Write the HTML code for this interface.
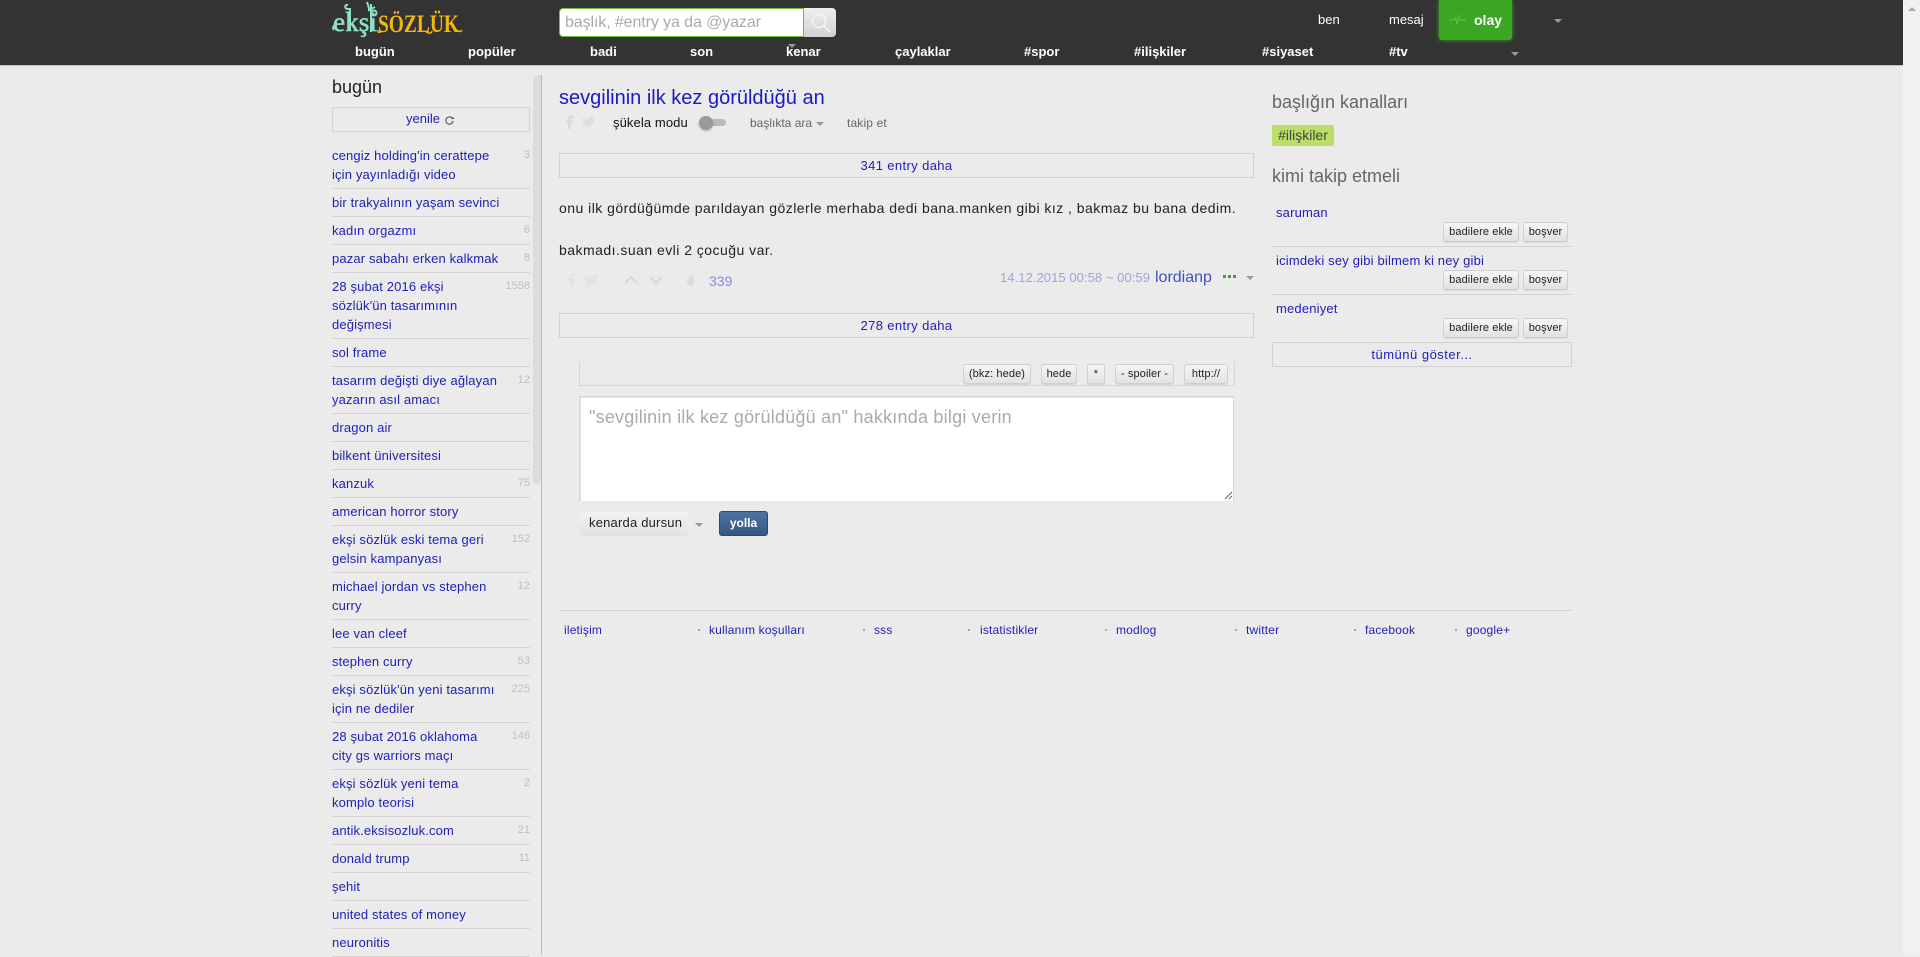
<!DOCTYPE html>
<html lang="tr">
<head>
<meta charset="utf-8">
<title>sevgilinin ilk kez görüldüğü an - ekşi sözlük</title>
<style>
html,body{margin:0;padding:0;width:1920px;height:955px;overflow:hidden;background:#ebebeb;font-family:"Liberation Sans",sans-serif;color:#222}
a{color:#2020b8;text-decoration:none}
.a,.a a{white-space:nowrap}
.a{position:absolute}
#hd{position:absolute;left:0;top:0;width:1903px;height:65px;background:#333;border-bottom:1px solid #bcc4c8}
#sb{position:absolute;left:1903px;top:0;width:17px;height:955px;background:#f1f1f1}
.nav{position:absolute;top:44px;line-height:16px;font-size:13px;font-weight:700;color:#fff;white-space:nowrap}
.top{position:absolute;top:12px;line-height:16px;font-size:13px;color:#fff;white-space:nowrap}
.car{position:absolute;width:0;height:0;border-left:4px solid transparent;border-right:4px solid transparent;border-top:4px solid #999}
#lst{position:absolute;left:332px;top:142px;width:198px;margin:0;padding:0;list-style:none;font-size:13px;letter-spacing:.14px;line-height:19px}
#lst li{position:relative;padding:4px 0 4px;border-bottom:1px solid #d4d4d4;white-space:nowrap}
#lst li i{position:absolute;right:0;top:4px;font-style:normal;font-size:11px;color:#b8c0c8;letter-spacing:0}
.box{position:absolute;box-sizing:border-box;border:1px solid #d2d2d2;text-align:center;font-size:13px;height:25px;line-height:23px;letter-spacing:.38px}
.btn{position:absolute;box-sizing:border-box;height:20px;border:1px solid #cfcfcf;border-radius:3px;background:linear-gradient(#f5f5f5,#e2e2e2);font-size:11px;line-height:18px;text-align:center;color:#222;letter-spacing:.1px;white-space:nowrap;box-shadow:0 1px 0 #d8d8d8}
.ft{position:absolute;top:622px;font-size:12px;line-height:16px;letter-spacing:.18px;white-space:nowrap}
.dot{position:absolute;top:629px;width:2px;height:2px;background:#aaa}
.ln{position:absolute;left:1272px;width:300px;height:1px;background:#d4d4d4}
.ent{position:absolute;left:559px;font-size:14px;line-height:20px;letter-spacing:.47px;color:#222;white-space:nowrap}
</style>
</head>
<body>
<div id="hd"></div>
<div id="sb"><div class="car" style="left:5px;top:7px;border-top:0;border-bottom:4px solid #aaa"></div></div>

<!-- logo -->
<svg class="a" style="left:330px;top:0" width="136" height="40" viewBox="0 0 136 40">
  <g font-family="Liberation Serif, serif">
    <text x="3" y="31" font-size="27" fill="#8fe0c8" stroke="#8fe0c8" stroke-width=".5" textLength="44" lengthAdjust="spacingAndGlyphs">ekşi</text>
    <text x="48" y="32" font-size="25" font-weight="700" fill="#f2b70a" textLength="81" lengthAdjust="spacingAndGlyphs">SÖZLÜK</text>
  </g>
  <g fill="none" stroke="#8fe0c8" stroke-width="2">
    <path d="M18 5c-3-1-4 3-1 4h3v22"/>
    <path d="M37 2c1 3 2 5 2 8l6-3"/>
    <path d="M41 4v28"/>
    <path d="M4 30c-2-2 0-6 3-5"/>
    <circle cx="44" cy="13" r="2.500"/>
  </g>
  <g fill="none" stroke="#f2b70a" stroke-width="1.500">
    <path d="M127 30c2 2 4 2 5 0"/>
    <path d="M96 32c3 2 6 1 6-1"/>
    <path d="M48 30c-1 3 3 3 3 1"/>
  </g>
</svg>

<!-- search -->
<div class="a" style="left:559px;top:8px;width:245px;height:29px;box-sizing:border-box;background:#fff;border:1px solid #6fbf40;border-radius:4px 0 0 4px;font-size:16px;letter-spacing:-.1px;color:#aaa;line-height:27px;padding-left:5px">başlık, #entry ya da @yazar</div>
<div class="a" style="left:804px;top:8px;width:32px;height:29px;background:linear-gradient(#efefef,#d2d2d2);border-radius:0 4px 4px 0">
  <svg width="32" height="29" viewBox="0 0 32 29"><circle cx="15" cy="13" r="6.500" fill="none" stroke="#fff" stroke-width="1"/><path d="M20 18l6 6" stroke="#fff" stroke-width="1.200"/></svg>
</div>

<!-- nav -->
<div class="nav" style="left:355px">bugün</div>
<div class="nav" style="left:468px">popüler</div>
<div class="nav" style="left:590px">badi</div>
<div class="nav" style="left:690px">son</div>
<div class="nav" style="left:786px">kenar</div>
<div class="car" style="left:788px;top:44px"></div>
<div class="nav" style="left:895px">çaylaklar</div>
<div class="nav" style="left:1024px">#spor</div>
<div class="nav" style="left:1134px">#ilişkiler</div>
<div class="nav" style="left:1262px">#siyaset</div>
<div class="nav" style="left:1389px">#tv</div>
<div class="car" style="left:1511px;top:52px"></div>
<div class="top" style="left:1318px">ben</div>
<div class="top" style="left:1389px">mesaj</div>
<div class="a" style="left:1439px;top:0;width:73px;height:40px;background:#3aa623;border-radius:0 0 3px 3px;box-shadow:0 0 5px #3aa623"></div>
<svg class="a" style="left:1449px;top:13px" width="17" height="14" viewBox="0 0 17 14"><path d="M0 7h5l1.500-2 1.500 6 1.500-9 1.500 5h6" fill="none" stroke="#63c04a" stroke-width="1"/></svg>
<div class="top" style="left:1474px;font-size:14px;font-weight:700">olay</div>
<div class="car" style="left:1554px;top:19px"></div>

<!-- left frame -->
<div class="a" style="left:332px;top:76px;font-size:18px;line-height:22px;color:#222">bugün</div>
<div class="a" style="left:332px;top:107px;width:198px;height:25px;box-sizing:border-box;border:1px solid #d2d2d2"></div>
<a class="a" style="left:406px;top:109px;font-size:13px;line-height:20px">yenile</a>
<svg class="a" style="left:445px;top:116px" width="9" height="9" viewBox="0 0 9 9"><path d="M7.700 3A3.600 3.600 0 1 0 8 5" fill="none" stroke="#555" stroke-width="1.100"/><path d="M6 3h3V1z" fill="#555"/></svg>
<div class="a" style="left:533px;top:75px;width:8px;height:409px;background:#dcdcdc;border-radius:6px 0 4px 4px"></div>
<div class="a" style="left:541px;top:75px;width:1px;height:880px;background:#b5bcc3"></div>

<ul id="lst">
<li><a>cengiz holding'in cerattepe<br>için yayınladığı video</a><i>3</i></li>
<li><a>bir trakyalının yaşam sevinci</a></li>
<li><a>kadın orgazmı</a><i>6</i></li>
<li><a>pazar sabahı erken kalkmak</a><i>8</i></li>
<li><a>28 şubat 2016 ekşi<br>sözlük'ün tasarımının<br>değişmesi</a><i>1558</i></li>
<li><a>sol frame</a></li>
<li><a>tasarım değişti diye ağlayan<br>yazarın asıl amacı</a><i>12</i></li>
<li><a>dragon air</a></li>
<li><a>bilkent üniversitesi</a></li>
<li><a>kanzuk</a><i>75</i></li>
<li><a>american horror story</a></li>
<li><a>ekşi sözlük eski tema geri<br>gelsin kampanyası</a><i>152</i></li>
<li><a>michael jordan vs stephen<br>curry</a><i>12</i></li>
<li><a>lee van cleef</a></li>
<li><a>stephen curry</a><i>53</i></li>
<li><a>ekşi sözlük'ün yeni tasarımı<br>için ne dediler</a><i>225</i></li>
<li><a>28 şubat 2016 oklahoma<br>city gs warriors maçı</a><i>146</i></li>
<li><a>ekşi sözlük yeni tema<br>komplo teorisi</a><i>2</i></li>
<li><a>antik.eksisozluk.com</a><i>21</i></li>
<li><a>donald trump</a><i>11</i></li>
<li><a>şehit</a></li>
<li><a>united states of money</a></li>
<li><a>neuronitis</a></li>
</ul>

<!-- main -->
<a class="a" style="left:559px;top:86px;font-size:20px;line-height:24px;color:#1a1ac4">sevgilinin ilk kez görüldüğü an</a>
<svg class="a" style="left:565px;top:115px" width="9" height="14" viewBox="0 0 9 14"><path d="M3 14V8H1V5.500h2V4c0-2.200 1.300-3.500 3.300-3.500H8.500V3H7c-.8 0-1 .4-1 1v1.500h2.500L8 8H6v6z" fill="#dddddd"/></svg>
<svg class="a" style="left:582px;top:116px" width="13" height="12" viewBox="0 0 24 24" preserveAspectRatio="none"><path d="M23.953 4.570a10 10 0 01-2.825.775 4.958 4.958 0 002.163-2.723c-.951.555-2.005.959-3.127 1.184a4.920 4.920 0 00-8.384 4.482C7.690 8.095 4.067 6.130 1.640 3.162a4.822 4.822 0 00-.666 2.475c0 1.710.870 3.213 2.188 4.096a4.904 4.904 0 01-2.228-.616v.060a4.923 4.923 0 003.946 4.827 4.996 4.996 0 01-2.212.085 4.936 4.936 0 004.604 3.417 9.867 9.867 0 01-6.102 2.105c-.390 0-.779-.023-1.170-.067a13.995 13.995 0 007.557 2.209c9.053 0 13.998-7.496 13.998-13.985 0-.210 0-.420-.015-.630A9.935 9.935 0 0024 4.590z" fill="#dddddd"/></svg>
<div class="a" style="left:613px;top:115px;font-size:13px;line-height:16px;letter-spacing:.1px;color:#111">şükela modu</div>
<div class="a" style="left:706px;top:119px;width:20px;height:7px;background:#afbec5;border-radius:4px"></div>
<div class="a" style="left:699px;top:116px;width:14px;height:14px;background:#9a9a9a;border-radius:50%;box-shadow:0 1px 2px rgba(0,0,0,.25)"></div>
<div class="a" style="left:750px;top:115px;font-size:12px;line-height:16px;color:#666">başlıkta ara</div>
<div class="car" style="left:816px;top:122px"></div>
<div class="a" style="left:847px;top:115px;font-size:12px;line-height:16px;letter-spacing:.15px;color:#666">takip et</div>

<div class="box" style="left:559px;top:153px;width:695px"><a>341 entry daha</a></div>

<div class="ent" style="top:198px">onu ilk gördüğümde parıldayan gözlerle merhaba dedi bana.manken gibi kız , bakmaz bu bana dedim.</div>
<div class="ent" style="top:240px">bakmadı.suan evli 2 çocuğu var.</div>

<svg class="a" style="left:567px;top:273px" width="9" height="14" viewBox="0 0 9 14"><path d="M3 14V8H1V5.500h2V4c0-2.200 1.300-3.500 3.300-3.500H8.500V3H7c-.8 0-1 .4-1 1v1.500h2.500L8 8H6v6z" fill="#e3e3e3"/></svg>
<svg class="a" style="left:584px;top:273px" width="15" height="14" viewBox="0 0 24 24" preserveAspectRatio="none"><path d="M23.953 4.570a10 10 0 01-2.825.775 4.958 4.958 0 002.163-2.723c-.951.555-2.005.959-3.127 1.184a4.920 4.920 0 00-8.384 4.482C7.690 8.095 4.067 6.130 1.640 3.162a4.822 4.822 0 00-.666 2.475c0 1.710.870 3.213 2.188 4.096a4.904 4.904 0 01-2.228-.616v.060a4.923 4.923 0 003.946 4.827 4.996 4.996 0 01-2.212.085 4.936 4.936 0 004.604 3.417 9.867 9.867 0 01-6.102 2.105c-.390 0-.779-.023-1.170-.067a13.995 13.995 0 007.557 2.209c9.053 0 13.998-7.496 13.998-13.985 0-.210 0-.420-.015-.630A9.935 9.935 0 0024 4.590z" fill="#e3e3e3"/></svg>
<svg class="a" style="left:624px;top:275px" width="40" height="10" viewBox="0 0 40 10"><path d="M1 8l6-6 6 6M26 2l6 6 6-6" fill="none" stroke="#d6d6d6" stroke-width="1.800"/></svg>
<svg class="a" style="left:686px;top:273px" width="10" height="14" viewBox="0 0 10 14"><path d="M5 1C3.500 4 1 6.500 1 9a4 4 0 0 0 8 0C9 6.500 6.500 4 5 1z" fill="#dcdcdc"/></svg>
<div class="a" style="left:709px;top:272px;font-size:14px;line-height:18px;color:#7d8fd6">339</div>
<div class="a" style="left:1000px;top:270px;font-size:13px;line-height:16px;letter-spacing:.06px;color:#98a6dc">14.12.2015 00:58 ~ 00:59</div>
<a class="a" style="left:1155px;top:268px;font-size:16px;line-height:20px;color:#3f52c0">lordianp</a>
<svg class="a" style="left:1223px;top:275px" width="14" height="4" viewBox="0 0 14 4"><rect x="0" y="0" width="3" height="3" fill="#4a9a3a"/><rect x="5" y="0" width="3" height="3" fill="#4a9a3a"/><rect x="10" y="0" width="3" height="3" fill="#4a9a3a"/></svg>
<div class="car" style="left:1246px;top:276px"></div>

<div class="box" style="left:559px;top:313px;width:695px"><a>278 entry daha</a></div>

<!-- editor -->
<div class="a" style="left:579px;top:362px;width:654px;height:23px;border:1px solid #d6d6d6;border-top:0"></div>
<div class="btn" style="left:963px;top:364px;width:68px">(bkz: hede)</div>
<div class="btn" style="left:1041px;top:364px;width:36px">hede</div>
<div class="btn" style="left:1087px;top:364px;width:18px">*</div>
<div class="btn" style="left:1115px;top:364px;width:59px">- spoiler -</div>
<div class="btn" style="left:1184px;top:364px;width:44px">http://</div>
<div class="a" style="left:579px;top:396px;width:655px;height:105px;box-sizing:border-box;background:#fff;border:1px solid #d6d6d6;border-bottom:0;box-shadow:inset 1px 1px 0 #e4e4e4;font-size:18px;letter-spacing:.22px;line-height:22px;color:#aaa;padding:9px 0 0 9px">"sevgilinin ilk kez görüldüğü an" hakkında bilgi verin</div>
<svg class="a" style="left:1224px;top:491px" width="9" height="9" viewBox="0 0 9 9"><path d="M1 8l7-7M5 8l3-3" stroke="#666" stroke-width="1"/></svg>

<div class="a" style="left:579px;top:512px;width:109px;height:24px;box-sizing:border-box;background:linear-gradient(#f2f2f2,#e2e2e2);border-radius:3px;font-size:13px;letter-spacing:.2px;line-height:22px;padding-left:10px;color:#222">kenarda dursun</div>
<div class="car" style="left:695px;top:523px"></div>
<div class="a" style="left:719px;top:511px;width:49px;height:25px;box-sizing:border-box;background:linear-gradient(#4c73a6,#365880);border:1px solid #2c4a70;border-radius:3px;color:#fff;font-size:12px;font-weight:700;line-height:23px;text-align:center">yolla</div>

<!-- footer -->
<div class="a" style="left:559px;top:610px;width:1013px;height:1px;background:#d4d4d4"></div>
<a class="ft" style="left:564px">iletişim</a><div class="dot" style="left:698px"></div>
<a class="ft" style="left:709px">kullanım koşulları</a><div class="dot" style="left:863px"></div>
<a class="ft" style="left:874px">sss</a><div class="dot" style="left:968px"></div>
<a class="ft" style="left:980px">istatistikler</a><div class="dot" style="left:1105px"></div>
<a class="ft" style="left:1116px">modlog</a><div class="dot" style="left:1235px"></div>
<a class="ft" style="left:1246px">twitter</a><div class="dot" style="left:1354px"></div>
<a class="ft" style="left:1365px">facebook</a><div class="dot" style="left:1455px"></div>
<a class="ft" style="left:1466px">google+</a>

<!-- right column -->
<div class="a" style="left:1272px;top:91px;font-size:18px;line-height:22px;color:#666">başlığın kanalları</div>
<div class="a" style="left:1272px;top:125px;width:62px;height:21px;background:#bbdf66;border-radius:2px;font-size:14px;line-height:20px;text-align:center;color:#444">#ilişkiler</div>
<div class="a" style="left:1272px;top:165px;font-size:18px;line-height:22px;color:#666">kimi takip etmeli</div>

<a class="a" style="left:1276px;top:205px;font-size:13px;line-height:16px;letter-spacing:.18px">saruman</a>
<div class="btn" style="left:1443px;top:222px;width:76px">badilere ekle</div>
<div class="btn" style="left:1523px;top:222px;width:45px">boşver</div>
<div class="ln" style="top:246px"></div>
<a class="a" style="left:1276px;top:253px;font-size:13px;line-height:16px;letter-spacing:.18px">icimdeki sey gibi bilmem ki ney gibi</a>
<div class="btn" style="left:1443px;top:270px;width:76px">badilere ekle</div>
<div class="btn" style="left:1523px;top:270px;width:45px">boşver</div>
<div class="ln" style="top:294px"></div>
<a class="a" style="left:1276px;top:301px;font-size:13px;line-height:16px;letter-spacing:.18px">medeniyet</a>
<div class="btn" style="left:1443px;top:318px;width:76px">badilere ekle</div>
<div class="btn" style="left:1523px;top:318px;width:45px">boşver</div>
<div class="box" style="left:1272px;top:342px;width:300px;letter-spacing:.5px"><a>tümünü göster...</a></div>
</body>
</html>
